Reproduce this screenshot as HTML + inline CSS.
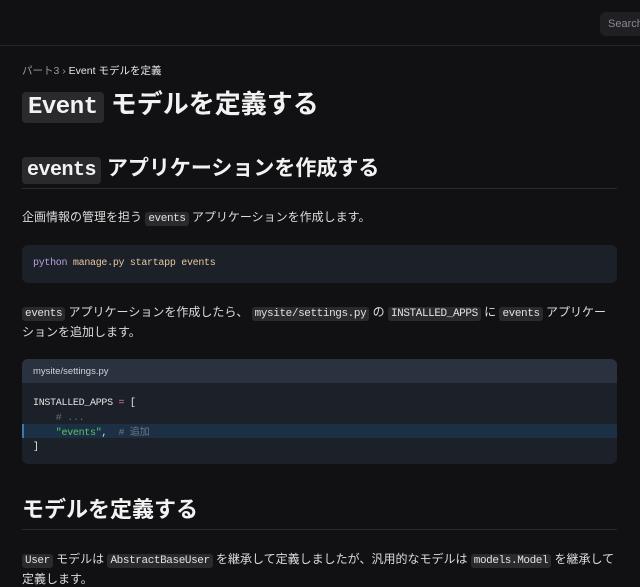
<!DOCTYPE html>
<html><head><meta charset="utf-8"><style>
*{margin:0;padding:0;box-sizing:border-box}
body{width:640px;height:576px;overflow:hidden;background:#111113;color:#dcdcdc;font-family:"Liberation Sans","Noto Sans CJK JP",sans-serif;position:relative}
.a{position:absolute;white-space:nowrap}
code,.m{font-family:"Liberation Mono","Noto Sans CJK JP",monospace}
.ic{background:#2a2a2e;border-radius:3px;padding:1px 3px;font-size:11px;letter-spacing:-.4px;color:#e0e0e0}
.hc{background:#2a2a2e;border-radius:4px;padding:2px 5px;letter-spacing:-.5px}
p{font-size:12px;color:#dcdcdc}
.blk{position:absolute;left:22px;width:595px;background:#1c2028;border-radius:6px;overflow:hidden}
.cl{position:absolute;left:33px;font-size:10px;line-height:14px;letter-spacing:-.3px;white-space:pre;font-family:"Liberation Mono","Noto Sans CJK JP",monospace}
</style></head><body>
<div class="a" style="left:0;top:0;width:640px;height:46px;border-bottom:1px solid #26262a"></div>
<div class="a" style="left:600px;top:12px;width:60px;height:24px;background:#202024;border-radius:6px;font-size:11px;color:#8a8a8e;padding:6px 8px">Search</div>
<div class="a" style="left:22px;top:63px;font-size:10.5px;color:#9a9a9e">パート3 › <span style="color:#e8e8e8">Event モデルを定義</span></div>
<div class="a" style="left:22px;top:86px;font-size:26px;font-weight:bold;color:#f2f2f2;line-height:36px"><code class="hc" style="font-size:24px;padding:2px 6px">Event</code> モデルを定義する</div>
<div class="a" style="left:22px;top:154px;font-size:21px;font-weight:bold;color:#f2f2f2;line-height:30px"><code class="hc" style="font-size:20px;padding:2px 5px">events</code> アプリケーションを作成する</div>
<div class="a" style="left:22px;top:188px;width:595px;border-top:1px solid #2a2a2e"></div>
<p class="a" style="left:22px;top:208px">企画情報の管理を担う <code class="ic">events</code> アプリケーションを作成します。</p>
<div class="blk" style="top:245px;height:38px"></div>
<div class="cl" style="top:257px"><span style="color:#b6a3e0">python</span> <span style="color:#e8c9a0">manage.py startapp events</span></div>
<p class="a" style="left:22px;top:303px"><code class="ic">events</code> アプリケーションを作成したら、 <code class="ic">mysite/settings.py</code> の <code class="ic">INSTALLED_APPS</code> に <code class="ic">events</code> アプリケー</p>
<p class="a" style="left:22px;top:323px">ションを追加します。</p>
<div class="blk" style="top:359px;height:105px">
<div style="height:24px;background:#29323e;font-size:9.5px;color:#d0d4da;padding:7px 11px">mysite/settings.py</div>
<div style="position:absolute;top:65px;left:0;width:595px;height:14px;background:#1b3044;border-left:2px solid #3a78b0"></div>
</div>
<div class="cl" style="top:397px;color:#e4e4e4">INSTALLED_APPS <span style="color:#e07a8a">=</span> [</div>
<div class="cl" style="top:412px;color:#666a70">    # ...</div>
<div class="cl" style="top:427px"><span style="color:#5cc46a">    "events"</span><span style="color:#ddd">,</span>  <span style="color:#70757c"># 追加</span></div>
<div class="cl" style="top:441px;color:#e4e4e4">]</div>
<div class="a" style="left:22px;top:494px;font-size:22px;font-weight:bold;color:#f2f2f2;line-height:32px">モデルを定義する</div>
<div class="a" style="left:22px;top:529px;width:595px;border-top:1px solid #2a2a2e"></div>
<p class="a" style="left:22px;top:550px"><code class="ic">User</code> モデルは <code class="ic">AbstractBaseUser</code> を継承して定義しましたが、汎用的なモデルは <code class="ic">models.Model</code> を継承して</p>
<p class="a" style="left:22px;top:570px">定義します。</p>
</body></html>
